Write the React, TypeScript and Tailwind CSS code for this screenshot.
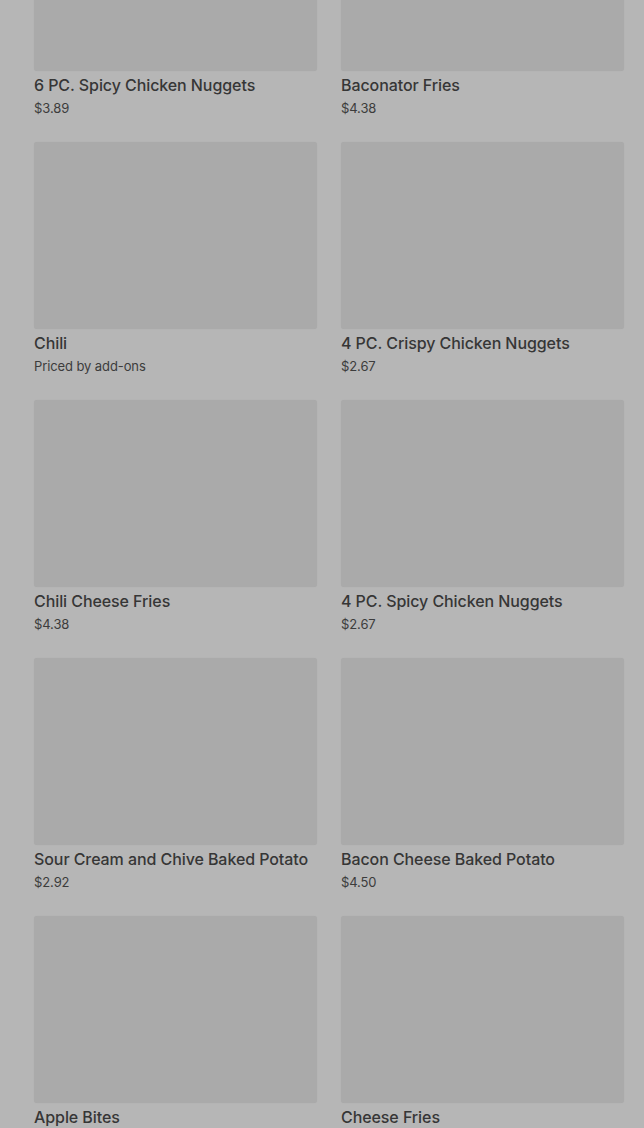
import React from 'react';

interface MenuItem {
  name: string;
  price: string;
}

const items: MenuItem[] = [
  { name: '6 PC. Spicy Chicken Nuggets', price: '$3.89' },
  { name: 'Baconator Fries', price: '$4.38' },
  { name: 'Chili', price: 'Priced by add-ons' },
  { name: '4 PC. Crispy Chicken Nuggets', price: '$2.67' },
  { name: 'Chili Cheese Fries', price: '$4.38' },
  { name: '4 PC. Spicy Chicken Nuggets', price: '$2.67' },
  { name: 'Sour Cream and Chive Baked Potato', price: '$2.92' },
  { name: 'Bacon Cheese Baked Potato', price: '$4.50' },
  { name: 'Apple Bites', price: '$1.99' },
  { name: 'Cheese Fries', price: '$3.29' },
];

const App: React.FC = () => {
  return (
    <div className="h-[1128px] overflow-hidden bg-[#b6b6b6]" style={{ fontFamily: 'Inter, "Noto Sans", sans-serif' }}>
      <div className="mt-[-116px] grid grid-cols-2 gap-x-[24px] gap-y-[25px] pl-[34px] pr-[20px]">
        {items.map((item) => (
          <div key={item.name} className="flex flex-col">
            <div className="h-[187px] rounded-[3px] bg-[#aaaaaa] shadow-[0_0_1px_rgba(0,0,0,0.08)]" />
            <div className="mt-[3px] text-[16px] leading-[22px] font-medium text-[#363636] tracking-[-0.08px] whitespace-nowrap">{item.name}</div>
            <div className="mt-[3px] text-[13px] leading-[18px] text-[#3c3c3c] tracking-[-0.1px]">{item.price}</div>
          </div>
        ))}
      </div>
    </div>
  );
};

export default App;
